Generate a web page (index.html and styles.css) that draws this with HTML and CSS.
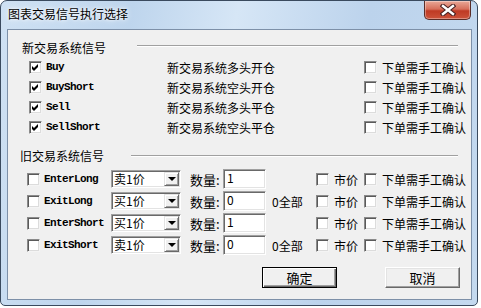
FILE: index.html
```html
<!DOCTYPE html>
<html lang="zh-CN">
<head>
    <meta charset="UTF-8">
    <title>图表交易信号执行选择</title>
    <link rel="stylesheet" href="styles.css">
</head>
<body>
    <div class="window">
        <div class="titlebar">
            <span class="title">图表交易信号执行选择</span>
            <span class="close-btn">
                <svg width="16" height="12" viewBox="0 0 16 12">
                    <path d="M3 2 L13 10 M13 2 L3 10" stroke="#4a2222" stroke-width="4.6" stroke-linecap="square"/>
                    <path d="M3 2 L13 10 M13 2 L3 10" stroke="#ffffff" stroke-width="2.4" stroke-linecap="square"/>
                </svg>
            </span>
        </div>
        <div class="client">

            <div class="group-head head-new">
                <span class="group-title">新交易系统信号</span>
                <span class="rule"></span>
            </div>
            <div class="new-row">
                <span class="check on"><svg width="7" height="7" viewBox="0 0 7 7"><path d="M0 2 L2 4 L6 0 L6 3 L2 7 L0 5 Z" fill="#000"/></svg></span>
                <span class="sig sig-new">Buy</span>
                <span class="desc">新交易系统多头开仓</span>
                <span class="check"></span>
                <span class="opt">下单需手工确认</span>
            </div>
            <div class="new-row">
                <span class="check on"><svg width="7" height="7" viewBox="0 0 7 7"><path d="M0 2 L2 4 L6 0 L6 3 L2 7 L0 5 Z" fill="#000"/></svg></span>
                <span class="sig sig-new">BuyShort</span>
                <span class="desc">新交易系统空头开仓</span>
                <span class="check"></span>
                <span class="opt">下单需手工确认</span>
            </div>
            <div class="new-row">
                <span class="check on"><svg width="7" height="7" viewBox="0 0 7 7"><path d="M0 2 L2 4 L6 0 L6 3 L2 7 L0 5 Z" fill="#000"/></svg></span>
                <span class="sig sig-new">Sell</span>
                <span class="desc">新交易系统多头平仓</span>
                <span class="check"></span>
                <span class="opt">下单需手工确认</span>
            </div>
            <div class="new-row">
                <span class="check on"><svg width="7" height="7" viewBox="0 0 7 7"><path d="M0 2 L2 4 L6 0 L6 3 L2 7 L0 5 Z" fill="#000"/></svg></span>
                <span class="sig sig-new">SellShort</span>
                <span class="desc">新交易系统空头平仓</span>
                <span class="check"></span>
                <span class="opt">下单需手工确认</span>
            </div>

            <div class="group-head head-old">
                <span class="group-title">旧交易系统信号</span>
                <span class="rule"></span>
            </div>
            <div class="old-row">
                <span class="check"></span>
                <span class="sig sig-old">EnterLong</span>
                <span class="combo"><span class="combo-text">卖1价</span><span class="combo-arrow"></span></span>
                <span class="qty">数量:</span>
                <span class="field">1</span>
                <span class="all"></span>
                <span class="check"></span>
                <span class="market">市价</span>
                <span class="check"></span>
                <span class="opt">下单需手工确认</span>
            </div>
            <div class="old-row">
                <span class="check"></span>
                <span class="sig sig-old">ExitLong</span>
                <span class="combo"><span class="combo-text">买1价</span><span class="combo-arrow"></span></span>
                <span class="qty">数量:</span>
                <span class="field">0</span>
                <span class="all">0全部</span>
                <span class="check"></span>
                <span class="market">市价</span>
                <span class="check"></span>
                <span class="opt">下单需手工确认</span>
            </div>
            <div class="old-row">
                <span class="check"></span>
                <span class="sig sig-old">EnterShort</span>
                <span class="combo"><span class="combo-text">买1价</span><span class="combo-arrow"></span></span>
                <span class="qty">数量:</span>
                <span class="field">1</span>
                <span class="all"></span>
                <span class="check"></span>
                <span class="market">市价</span>
                <span class="check"></span>
                <span class="opt">下单需手工确认</span>
            </div>
            <div class="old-row">
                <span class="check"></span>
                <span class="sig sig-old">ExitShort</span>
                <span class="combo"><span class="combo-text">卖1价</span><span class="combo-arrow"></span></span>
                <span class="qty">数量:</span>
                <span class="field">0</span>
                <span class="all">0全部</span>
                <span class="check"></span>
                <span class="market">市价</span>
                <span class="check"></span>
                <span class="opt">下单需手工确认</span>
            </div>

            <div class="actions">
                <span class="btn btn-default">确定</span>
                <span class="btn">取消</span>
            </div>
        </div>
    </div>
</body>
</html>
```

FILE: styles.css
```css
body {
    margin: 0;
    background-color: #ffffff;
    font-family: "Noto Sans CJK SC", "Liberation Sans", sans-serif;
    font-size: 12px;
    color: #000;
}
.window {
    width: 478px;
    height: 306px;
    box-sizing: border-box;
    border: 1px solid #3a4a5e;
    border-radius: 7px 7px 5px 5px;
    background: linear-gradient(100deg, #cfe1f3 0%, #bed5ed 25%, #d6e6f6 45%, #bcd3ec 70%, #c4d9ef 100%);
    display: flex;
    flex-direction: column;
}
.titlebar {
    height: 28px;
    display: flex;
    align-items: flex-start;
    padding-left: 7px;
}
.title {
    line-height: 14px;
    margin-top: 6px;
    text-shadow: 0 0 6px #ffffff, 0 0 3px #ffffff;
}
.close-btn {
    margin-left: auto;
    margin-right: 6px;
    width: 47px;
    height: 19px;
    box-sizing: border-box;
    border: 1px solid #5a2d28;
    border-top: none;
    border-radius: 0 0 5px 5px;
    background: linear-gradient(180deg, #e9a898 0%, #d66f5b 45%, #bf3a24 55%, #cc523a 100%);
    box-shadow: inset 0 0 0 1px rgba(255,255,255,0.35);
    display: flex;
    align-items: center;
    justify-content: center;
}
.client {
    margin-left: 6px;
    width: 465px;
    height: 271px;
    box-sizing: border-box;
    border: 1px solid #7d90a8;
    background-color: #f0f0f0;
}

/* cabecera de grupo con línea */
.group-head {
    display: flex;
    align-items: flex-start;
    line-height: 14px;
    padding-right: 13px;
}
.head-new {
    margin-top: 11px;
    padding-left: 14px;
}
.head-old {
    margin-top: 12px;
    padding-left: 12px;
}
.rule {
    flex: 1;
    height: 1px;
    background-color: #a0a0a0;
    border-bottom: 1px solid #ffffff;
}
.head-new .rule {
    margin-left: 31px;
    margin-top: 4px;
}
.head-old .rule {
    margin-left: 27px;
    margin-top: 6px;
}

/* filas */
.new-row {
    display: flex;
    align-items: center;
    height: 20px;
    padding-left: 21px;
}
.head-new + .new-row {
    margin-top: 2px;
}
.old-row {
    display: flex;
    align-items: center;
    height: 22px;
    padding-left: 19px;
}
.head-old + .old-row {
    margin-top: 5px;
}
.check {
    width: 13px;
    height: 13px;
    flex: none;
    box-sizing: border-box;
    background-color: #ffffff;
    border: 1px solid;
    border-color: #8a8a8a #f4f4f4 #f4f4f4 #8a8a8a;
    box-shadow: inset 1px 1px 0 #5a5a5a, inset -1px -1px 0 #dcdcdc;
    display: flex;
    align-items: center;
    justify-content: center;
}
.sig {
    font-family: "Liberation Mono", "DejaVu Sans Mono", monospace;
    font-size: 11px;
    letter-spacing: -0.6px;
    font-weight: bold;
    margin-left: 4px;
}
.sig-new {
    width: 121px;
}
.sig-old {
    width: 67px;
}
.desc {
    width: 197px;
}
.opt {
    margin-left: 5px;
}

/* controles del grupo antiguo */
.combo {
    width: 70px;
    height: 18px;
    box-sizing: border-box;
    background-color: #ffffff;
    border: 1px solid;
    border-color: #a0a0a0 #ffffff #ffffff #a0a0a0;
    box-shadow: inset 1px 1px 0 #696969, inset -1px -1px 0 #e3e3e3;
    display: flex;
    align-items: center;
    padding: 1px 1px 1px 2px;
}
.combo-text {
    flex: 1;
    line-height: 14px;
}
.combo-arrow {
    width: 15px;
    height: 14px;
    box-sizing: border-box;
    background-color: #f0f0f0;
    border: 1px solid;
    border-color: #e3e3e3 #696969 #696969 #e3e3e3;
    box-shadow: inset 1px 1px 0 #ffffff, inset -1px -1px 0 #a0a0a0;
    display: flex;
    align-items: center;
    justify-content: center;
}
.combo-arrow::after {
    content: "";
    border-left: 4px solid transparent;
    border-right: 4px solid transparent;
    border-top: 4px solid #000;
}
.qty {
    margin-left: 9px;
    width: 33px;
    font-size: 13px;
}
.field {
    width: 43px;
    height: 20px;
    box-sizing: border-box;
    background-color: #ffffff;
    border: 1px solid;
    border-color: #a0a0a0 #ffffff #ffffff #a0a0a0;
    box-shadow: inset 1px 1px 0 #696969, inset -1px -1px 0 #e3e3e3;
    padding: 1px 0 0 3px;
    line-height: 14px;
}
.all {
    margin-left: 6px;
    width: 44px;
}
.market {
    margin-left: 5px;
    width: 30px;
}

/* botones */
.actions {
    display: flex;
    justify-content: flex-end;
    gap: 48px;
    padding-right: 11px;
    margin-top: 11px;
}
.btn {
    width: 75px;
    height: 21px;
    box-sizing: border-box;
    background-color: #f0f0f0;
    border: 1px solid;
    border-color: #ffffff #696969 #696969 #ffffff;
    box-shadow: inset -1px -1px 0 #a0a0a0, inset 1px 1px 0 #e3e3e3;
    display: flex;
    align-items: center;
    justify-content: center;
    font-size: 13px;
}
.btn-default {
    border-color: #000;
    box-shadow: inset 1px 1px 0 #ffffff, inset -1px -1px 0 #696969, inset -2px -2px 0 #a0a0a0;
}
```
